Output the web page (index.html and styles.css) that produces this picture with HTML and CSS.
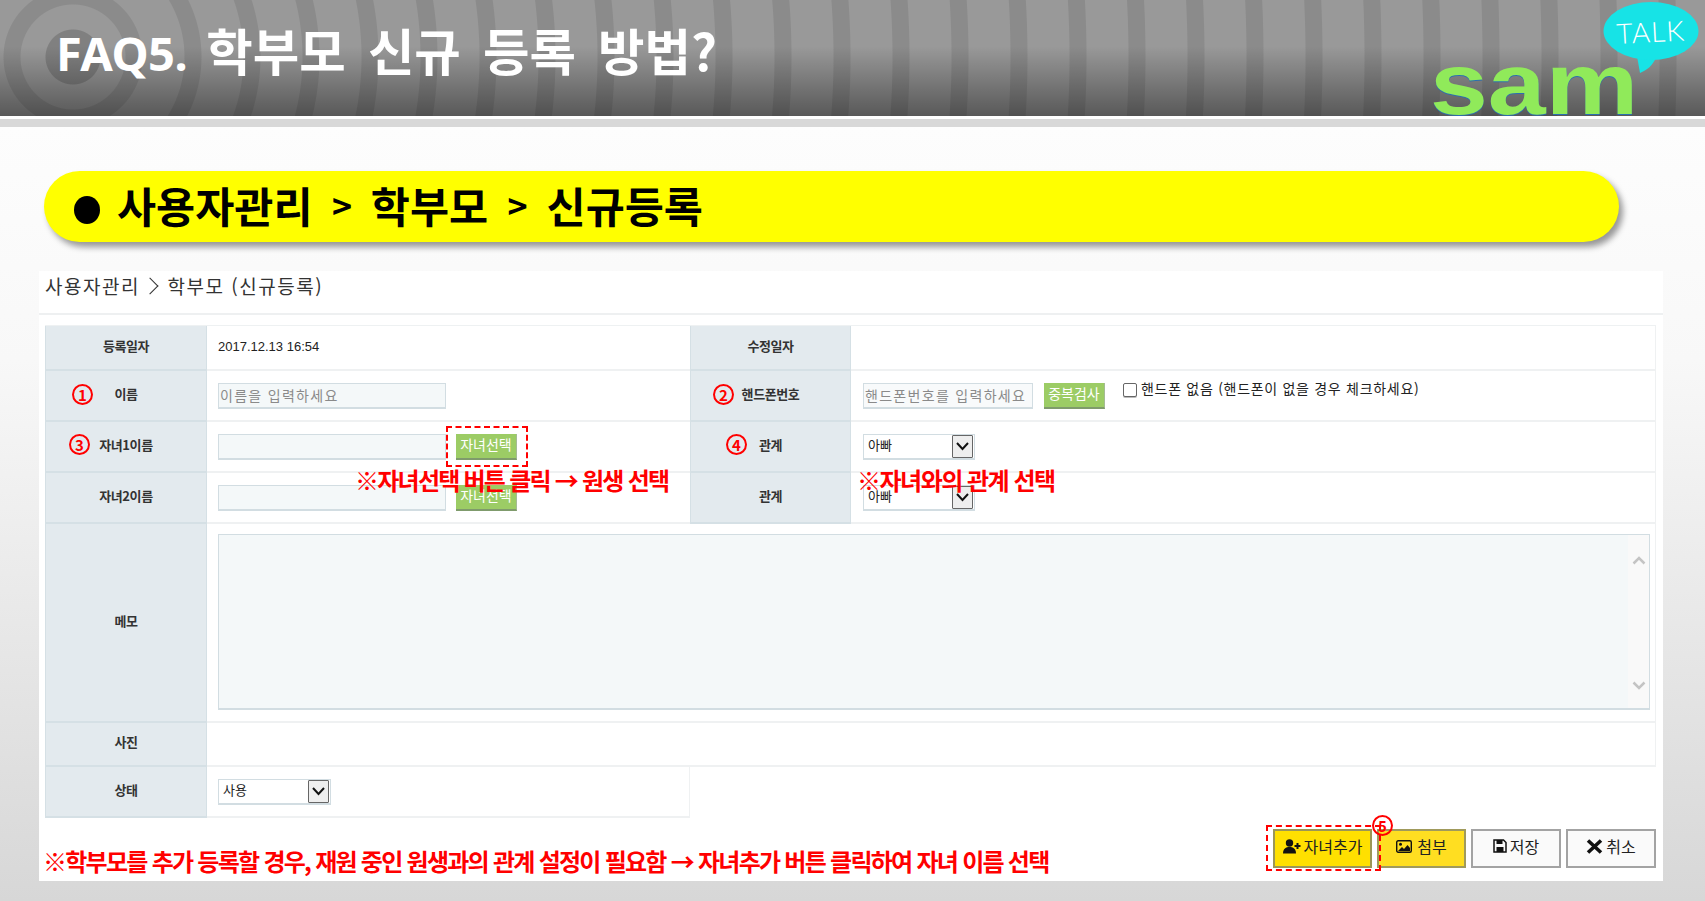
FILE: index.html
```html
<!DOCTYPE html>
<html lang="ko">
<head>
    <meta charset="UTF-8">
    <title>FAQ5. 학부모 신규 등록 방법?</title>
    <link rel="stylesheet" href="styles.css">
</head>
<body>

    <header class="top">
        <h1><span class="faq">FAQ5.</span> 학부모 신규 등록 방법?</h1>
        <svg class="logo" width="280" height="116" viewBox="0 0 280 116">
            <path d="M212 56 L215 73 C222 70 227 66 231 58 Z" fill="#17e3e6"/>
            <ellipse cx="226" cy="31" rx="47.500" ry="29" fill="#17e3e6"/>
            <text class="logo-talk" x="192" y="44" transform="rotate(-3 192 44)">TALK</text>
            <text class="logo-sam-back" transform="translate(5 115) scale(1.040 .88)">sam</text>
            <text class="logo-sam" transform="translate(5 114) scale(1.040 .88)">sam</text>
        </svg>
    </header>
    <div class="top-line"></div>

    <main class="slide">
        <h2 class="pill"><span class="dot"></span>사용자관리 <i>&gt;</i> 학부모 <i>&gt;</i> 신규등록</h2>

        <section class="panel">
            <div class="crumb">사용자관리 <span class="crumb-sep"></span> 학부모 (신규등록)</div>

            <table class="form">
                <colgroup>
                    <col class="c-th"><col class="c-td"><col class="c-th2"><col>
                </colgroup>
                <tr class="r45">
                    <th>등록일자</th>
                    <td class="date">2017.12.13 16:54</td>
                    <th>수정일자</th>
                    <td></td>
                </tr>
                <tr class="r51">
                    <th>이름</th>
                    <td><input class="field" type="text" placeholder="이름을 입력하세요"></td>
                    <th>핸드폰번호</th>
                    <td>
                        <div class="phone">
                            <input class="field field-phone" type="text" placeholder="핸드폰번호를 입력하세요">
                            <button class="green">중복검사</button>
                            <label class="nophone"><input type="checkbox">핸드폰 없음 (핸드폰이 없을 경우 체크하세요)</label>
                        </div>
                    </td>
                </tr>
                <tr class="r51">
                    <th>자녀1이름</th>
                    <td><div class="pair"><input class="field" type="text"><button class="green">자녀선택</button></div></td>
                    <th>관계</th>
                    <td>
                        <div class="sel"><span>아빠</span><b class="sel-arrow"><svg width="15" height="10" viewBox="0 0 15 10"><path d="M2 2 L7.500 8 L13 2" fill="none" stroke="#111" stroke-width="2"/></svg></b></div>
                    </td>
                </tr>
                <tr class="r51">
                    <th>자녀2이름</th>
                    <td><div class="pair"><input class="field" type="text"><button class="green">자녀선택</button></div></td>
                    <th>관계</th>
                    <td>
                        <div class="sel"><span>아빠</span><b class="sel-arrow"><svg width="15" height="10" viewBox="0 0 15 10"><path d="M2 2 L7.500 8 L13 2" fill="none" stroke="#111" stroke-width="2"/></svg></b></div>
                    </td>
                </tr>
                <tr class="r199">
                    <th>메모</th>
                    <td colspan="3" class="memo-cell">
                        <div class="memo">
                            <textarea></textarea>
                            <div class="memo-bar">
                                <svg width="14" height="9" viewBox="0 0 14 9"><path d="M1.500 7.500 L7 2 L12.500 7.500" fill="none" stroke="#c4c4c4" stroke-width="2.500"/></svg>
                                <svg width="14" height="9" viewBox="0 0 14 9"><path d="M1.500 1.500 L7 7 L12.500 1.500" fill="none" stroke="#c4c4c4" stroke-width="2.500"/></svg>
                            </div>
                        </div>
                    </td>
                </tr>
                <tr class="r44">
                    <th>사진</th>
                    <td colspan="3"></td>
                </tr>
                <tr class="r51">
                    <th>상태</th>
                    <td>
                        <div class="sel sel-state"><span>사용</span><b class="sel-arrow"><svg width="15" height="10" viewBox="0 0 15 10"><path d="M2 2 L7.500 8 L13 2" fill="none" stroke="#111" stroke-width="2"/></svg></b></div>
                    </td>
                </tr>
            </table>

            <div class="foot">
                <p class="note-main">※학부모를 추가 등록할 경우, 재원 중인 원생과의 관계 설정이 필요함 → 자녀추가 버튼 클릭하여 자녀 이름 선택</p>
                <div class="actions">
                    <button class="act act-add">
                        <svg width="18" height="15" viewBox="0 0 18 15"><circle cx="6.500" cy="4" r="3.700" fill="#111"/><path d="M0 14.500 C0 9.500 3 8 6.500 8 C10 8 13 9.500 13 14.500 Z" fill="#111"/><path d="M11.500 7 H17.500 M14.500 4 V10" stroke="#111" stroke-width="2"/></svg>
                        자녀추가
                    </button>
                    <button class="act act-attach">
                        <svg width="16" height="13" viewBox="0 0 16 13"><rect x="0.700" y="0.700" width="14.600" height="11.600" rx="1.500" fill="none" stroke="#111" stroke-width="1.400"/><circle cx="4.500" cy="4.300" r="1.500" fill="#111"/><path d="M2 11 L6 7 L8 9 L11.500 5 L14 8 V11 Z" fill="#111"/></svg>
                        첨부
                    </button>
                    <button class="act">
                        <svg width="14" height="14" viewBox="0 0 14 14"><path d="M1 1 H10.500 L13 3.500 V13 H1 Z" fill="none" stroke="#111" stroke-width="1.500"/><rect x="3.500" y="1" width="6" height="4" fill="#111"/><rect x="3.500" y="8" width="7" height="5" fill="#111"/></svg>
                        저장
                    </button>
                    <button class="act">
                        <svg width="17" height="15" viewBox="0 0 17 15"><path d="M2 1.500 L15 13.500 M15 1.500 L2 13.500" stroke="#111" stroke-width="3.600"/></svg>
                        취소
                    </button>
                </div>
            </div>

            <!-- annotations lying over the form -->
            <span class="num num1">1</span>
            <span class="num num2">2</span>
            <span class="num num3">3</span>
            <span class="num num4">4</span>
            <span class="num num5">5</span>
            <div class="dash dash1"></div>
            <div class="dash dash2"></div>
            <p class="note note1">※자녀선택 버튼 클릭 → 원생 선택</p>
            <p class="note note2">※자녀와의 관계 선택</p>
        </section>
    </main>

</body>
</html>
```

FILE: styles.css
```css
* {
    box-sizing: border-box;
}
body {
    margin: 0;
    width: 1705px;
    height: 901px;
    overflow: hidden;
    font-family: "Noto Sans CJK KR", "Noto Sans", sans-serif;
    background-color: #fff;
}

/* top band */
.top {
    height: 116px;
    display: flex;
    justify-content: space-between;
    padding-left: 56px;
    background:
        linear-gradient(rgba(0,0,0,0) 0, rgba(0,0,0,0) 40%, rgba(0,0,0,.42) 100%),
        radial-gradient(circle at 73px 57px, #808080 0, #808080 27px, rgba(0,0,0,0) 28px),
        repeating-radial-gradient(circle at 73px 57px, #8b8b8b 0, #8b8b8b 10px, #999 11px, #999 52px, #8b8b8b 53px, #8b8b8b 59px);
}
.top h1 {
    margin: 0;
    padding-top: 15px;
    color: #fff;
    font-size: 50.500px;
    font-weight: 700;
    line-height: 68px;
    word-spacing: 8px;
    white-space: nowrap;
}
.faq {
    margin-right: -3px;
    font-family: "Noto Sans", sans-serif;
    font-size: 47px;
    letter-spacing: -0.5px;
}
.logo {
    flex: none;
}
.logo-talk {
    font-family: "Lato", sans-serif;
    font-size: 28px;
    font-weight: 300;
    letter-spacing: 1px;
    fill: #fff;
}
.logo-sam {
    font-family: "Liberation Sans", sans-serif;
    font-size: 100px;
    font-weight: 700;
    fill: #90ea5a;
}
.logo-sam-back {
    font-family: "Liberation Sans", sans-serif;
    font-size: 100px;
    font-weight: 700;
    fill: #2a6fb0;
}
.top-line {
    height: 11px;
    border-top: 3px solid #fff;
    background-color: #d8d8d8;
}

/* slide body */
.slide {
    height: 774px;
    padding: 44px 0 0 39px;
    background: linear-gradient(#fdfdfd 0, #f8f8f8 30%, #d7d7d7 100%);
}
.pill {
    width: 1575px;
    height: 71px;
    margin: 0 0 29px 5px;
    padding: 0 0 4px 29px;
    display: flex;
    align-items: center;
    background-color: #ff0;
    border-radius: 36px;
    box-shadow: 4px 5px 6px rgba(0,0,0,.4);
    color: #000;
    font-size: 42.500px;
    font-weight: 700;
    line-height: 67px;
    white-space: pre;
}
.pill i {
    font-style: normal;
    font-size: 34px;
    margin: 0 7px 0 7.500px;
}
.dot {
    width: 26px;
    height: 28px;
    margin: 11px 17px 0 1px;
    border-radius: 50%;
    background-color: #000;
}

/* white panel */
.panel {
    position: relative;
    width: 1624px;
    height: 610px;
    padding: 0 7px 0 6px;
    background-color: #fff;
}
.crumb {
    height: 44px;
    margin: 0 -7px 10px -6px;
    padding: 2px 0 0 6px;
    border-bottom: 2px solid #eef0f1;
    color: #333;
    font-size: 19px;
    line-height: 26px;
    letter-spacing: 1.500px;
}
.crumb-sep {
    display: inline-block;
    width: 12px;
    height: 12px;
    margin: 0 5px 2px -3px;
    border-top: 1px solid #333;
    border-right: 1px solid #333;
    transform: rotate(45deg);
}

/* form table */
.form {
    width: 1611px;
    table-layout: fixed;
    border-collapse: separate;
    border-spacing: 0;
    border-top: 1px solid #eef1f2;
}
.c-th {
    width: 162px;
}
.c-td {
    width: 483px;
}
.c-th2 {
    width: 161px;
}
.r45 { height: 45px; }
.r51 { height: 51px; }
.r44 { height: 44px; }
.r199 { height: 199px; }
.form th {
    padding: 0 0 5px;
    background-color: #e3eaee;
    border-left: 1px solid #d5e0e5;
    border-right: 1px solid #d5e0e5;
    border-bottom: 2px solid #d5e0e5;
    color: #333;
    font-size: 13px;
    font-weight: 700;
    letter-spacing: -0.4px;
}
.form td {
    padding: 0 0 0 11px;
    border-bottom: 2px solid #eff1f2;
    color: #222;
    font-size: 13px;
}
.form td:nth-child(4) {
    padding-left: 12px;
}
.form td:last-child {
    border-right: 1px solid #eff1f2;
}
.form .date {
    padding-bottom: 2px;
    font-family: "Liberation Sans", sans-serif;
    font-size: 13px;
    letter-spacing: 0;
}
.field {
    display: block;
    width: 228px;
    height: 26px;
    padding: 0 0 0 1px;
    background-color: #f4f8f9;
    border: 1px solid #d2dde2;
    border-bottom-width: 2px;
    font-family: inherit;
    font-size: 14px;
    letter-spacing: 1.3px;
}
.field::placeholder {
    color: #8a8a8a;
    opacity: 1;
}
.field-phone {
    width: 170px;
    background-color: #f8fafb;
}
.pair {
    display: flex;
    gap: 10px;
}
.phone {
    display: flex;
    align-items: flex-start;
    gap: 11px;
}
.green {
    width: 61px;
    height: 26px;
    padding: 0 0 3px;
    background-color: #9ccc65;
    border: none;
    border-bottom: 2px solid #7f9b6c;
    border-right: 1px solid #a5bb95;
    color: #fff;
    font-family: inherit;
    font-size: 14px;
}
.nophone {
    display: flex;
    align-items: flex-start;
    margin: -1px 0 0 7px;
    color: #222;
    font-size: 14px;
    line-height: 12px;
    letter-spacing: 0.7px;
    white-space: nowrap;
}
.nophone input {
    appearance: none;
    width: 14px;
    height: 14px;
    margin: 1px 4px 0 0;
    background-color: #fff;
    border: 1px solid #666;
    border-radius: 2px;
    box-shadow: 0 1px 0 #bbb;
}
.sel {
    width: 112px;
    height: 26px;
    padding: 1px 1px 1px 4px;
    display: flex;
    align-items: center;
    justify-content: space-between;
    background-color: #fff;
    border: 1px solid #d2dde2;
    border-bottom-width: 2px;
    color: #222;
    font-size: 13px;
}
.sel span {
    padding-bottom: 3px;
}
.sel-arrow {
    width: 21px;
    height: 23px;
    display: flex;
    align-items: center;
    justify-content: center;
    background-color: #eee;
    border: 1px solid #666;
    border-radius: 1px;
}
.sel-state {
    width: 113px;
}
.memo-cell {
    vertical-align: top;
    padding-top: 10px !important;
}
.memo {
    width: 1432px;
    height: 176px;
    display: flex;
    background-color: #f4f8f9;
    border: 1px solid #d2dde2;
    border-bottom-width: 2px;
}
.memo textarea {
    flex: 1;
    background: transparent;
    border: none;
    resize: none;
}
.memo-bar {
    width: 21px;
    padding: 21px 0 18px;
    display: flex;
    flex-direction: column;
    align-items: center;
    justify-content: space-between;
    background-color: #f9f9f9;
}

/* bottom row */
.foot {
    display: flex;
    justify-content: space-between;
    padding-top: 11px;
}
.note-main {
    margin: 19px 0 0 -2px;
    color: #f00;
    font-size: 24px;
    font-weight: 700;
    line-height: 26px;
    letter-spacing: -1.73px;
    white-space: nowrap;
}
.actions {
    display: flex;
    gap: 5px;
}
.act {
    width: 90px;
    height: 39px;
    padding: 0 0 5px;
    display: flex;
    align-items: center;
    justify-content: center;
    gap: 3px;
    background-color: #fafafa;
    border: 2px solid #a3a3a3;
    color: #222;
    font-family: inherit;
    font-size: 16px;
}
.act-add {
    width: 99px;
    background-color: #ffe000;
    border-color: #9b9656;
}
.act-attach {
    width: 89px;
    gap: 5px;
    background-color: #ffde21;
    border-color: #a09a5c;
}

/* annotations */
.num {
    position: absolute;
    width: 21px;
    height: 21px;
    display: flex;
    align-items: center;
    justify-content: center;
    border: 2px solid #f00;
    border-radius: 50%;
    color: #f00;
    font-size: 15px;
    font-weight: 700;
    line-height: 1;
}
.num1 { left: 33px; top: 113px; }
.num2 { left: 674px; top: 113px; }
.num3 { left: 30px; top: 163px; }
.num4 { left: 687px; top: 163px; }
.num5 { left: 1333px; top: 544px; }
.dash {
    position: absolute;
    border: 2px dashed #f00;
}
.dash1 {
    left: 407px;
    top: 155px;
    width: 82px;
    height: 41px;
}
.dash2 {
    left: 1227px;
    top: 554px;
    width: 115px;
    height: 46px;
}
.note {
    position: absolute;
    margin: 0;
    color: #f00;
    font-size: 24px;
    font-weight: 700;
    line-height: 26px;
    letter-spacing: -1.75px;
    white-space: nowrap;
}
.note1 {
    left: 316px;
    top: 196px;
}
.note2 {
    left: 818px;
    top: 196px;
    letter-spacing: -1.500px;
}
```
